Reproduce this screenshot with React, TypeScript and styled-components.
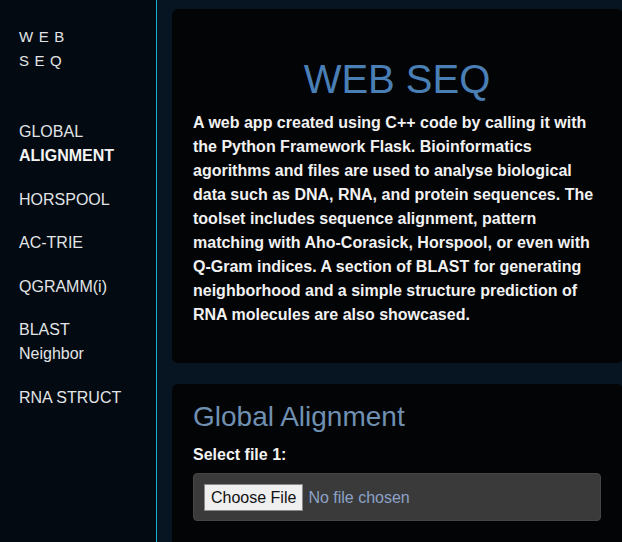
import React from "react";
import styled, { createGlobalStyle } from "styled-components";

const Global = createGlobalStyle`
  html, body { margin: 0; padding: 0; }
  body {
    background: #071522;
    font-family: "Liberation Sans", Arial, sans-serif;
    overflow: hidden;
  }
  * { box-sizing: border-box; }
`;

const Layout = styled.div`
  display: flex;
  min-height: 100vh;
  width: 100vw;
`;

const Sidebar = styled.nav`
  flex: 0 0 157px;
  background: #030a12;
  border-right: 1px solid #1ab0cc;
  padding: 25px 8px 0 19px;
  color: #e2e4e6;
  font-size: 16px;
  line-height: 24px;
`;

const Brand = styled.div`
  font-size: 15px;
  letter-spacing: 5.5px;
  margin-bottom: 47px;
`;

const NavList = styled.ul`
  list-style: none;
  margin: 0;
  padding: 0;
  display: flex;
  flex-direction: column;
  gap: 19.6px;
`;

const NavItem = styled.li`
  color: #e2e4e6;
`;

const Strong = styled.span`
  font-weight: 700;
  color: #f4f4f4;
`;

const Main = styled.main`
  flex: 1;
  min-width: 0;
  padding: 9px 0 0 15px;
  display: flex;
  flex-direction: column;
  gap: 21px;
`;

const Card = styled.section<{ $top: number; $bottom: number }>`
  background: #030406;
  border-radius: 6px;
  margin-right: -1px;
  padding: ${(p) => p.$top}px 22px ${(p) => p.$bottom}px 21px;
`;

const Title = styled.h1`
  margin: 25px 0 8px;
  text-align: center;
  font-size: 40px;
  line-height: 48px;
  font-weight: 400;
  color: #4a7fb6;
`;

const Intro = styled.p`
  margin: 0;
  color: #f2f2f2;
  font-weight: 700;
  font-size: 16px;
  line-height: 24px;
`;

const SectionTitle = styled.h2`
  margin: 0 0 11px;
  font-size: 28px;
  line-height: 31px;
  font-weight: 400;
  color: #7090b2;
`;

const Label = styled.label`
  display: block;
  color: #f2f2f2;
  font-weight: 700;
  font-size: 16px;
  line-height: 24px;
  margin-bottom: 6px;
`;

const FileInput = styled.input`
  display: block;
  width: 100%;
  height: 48px;
  background: #3a3a3a;
  border: 1px solid #454545;
  border-radius: 4px;
  padding: 10px 10px;
  color: #8ca2c6;
  font-family: "Liberation Sans", Arial, sans-serif;
  font-size: 16px;

  &::file-selector-button {
    background: #efefef;
    color: #111;
    border: 1px solid #8a8a8a;
    border-radius: 0;
    padding: 3px 6px;
    margin-right: 5px;
    height: 27px;
    font-family: "Liberation Sans", Arial, sans-serif;
    font-size: 16px;
  }
`;

const navItems: React.ReactNode[] = [
  <>GLOBAL<br /><Strong>ALIGNMENT</Strong></>,
  <>HORSPOOL</>,
  <>AC-TRIE</>,
  <>QGRAMM(i)</>,
  <>BLAST<br />Neighbor</>,
  <>RNA STRUCT</>,
];

export default function App() {
  return (
    <>
      <Global />
      <Layout>
        <Sidebar>
          <Brand>
            WEB
            <br />
            SEQ
          </Brand>
          <NavList>
            {navItems.map((item, i) => (
              <NavItem key={i}>{item}</NavItem>
            ))}
          </NavList>
        </Sidebar>
        <Main>
          <Card $top={21} $bottom={36}>
            <Title>WEB SEQ</Title>
            <Intro>
              A web app created using C++ code by calling it with the Python Framework Flask.
              Bioinformatics agorithms and files are used to analyse biological data such as DNA,
              RNA, and protein sequences. The toolset includes sequence alignment, pattern matching
              with Aho-Corasick, Horspool, or even with Q-Gram indices. A section of BLAST for
              generating neighborhood and a simple structure prediction of RNA molecules are also
              showcased.
            </Intro>
          </Card>
          <Card $top={17} $bottom={40}>
            <SectionTitle>Global Alignment</SectionTitle>
            <Label htmlFor="file1">Select file 1:</Label>
            <FileInput id="file1" type="file" />
          </Card>
        </Main>
      </Layout>
    </>
  );
}
